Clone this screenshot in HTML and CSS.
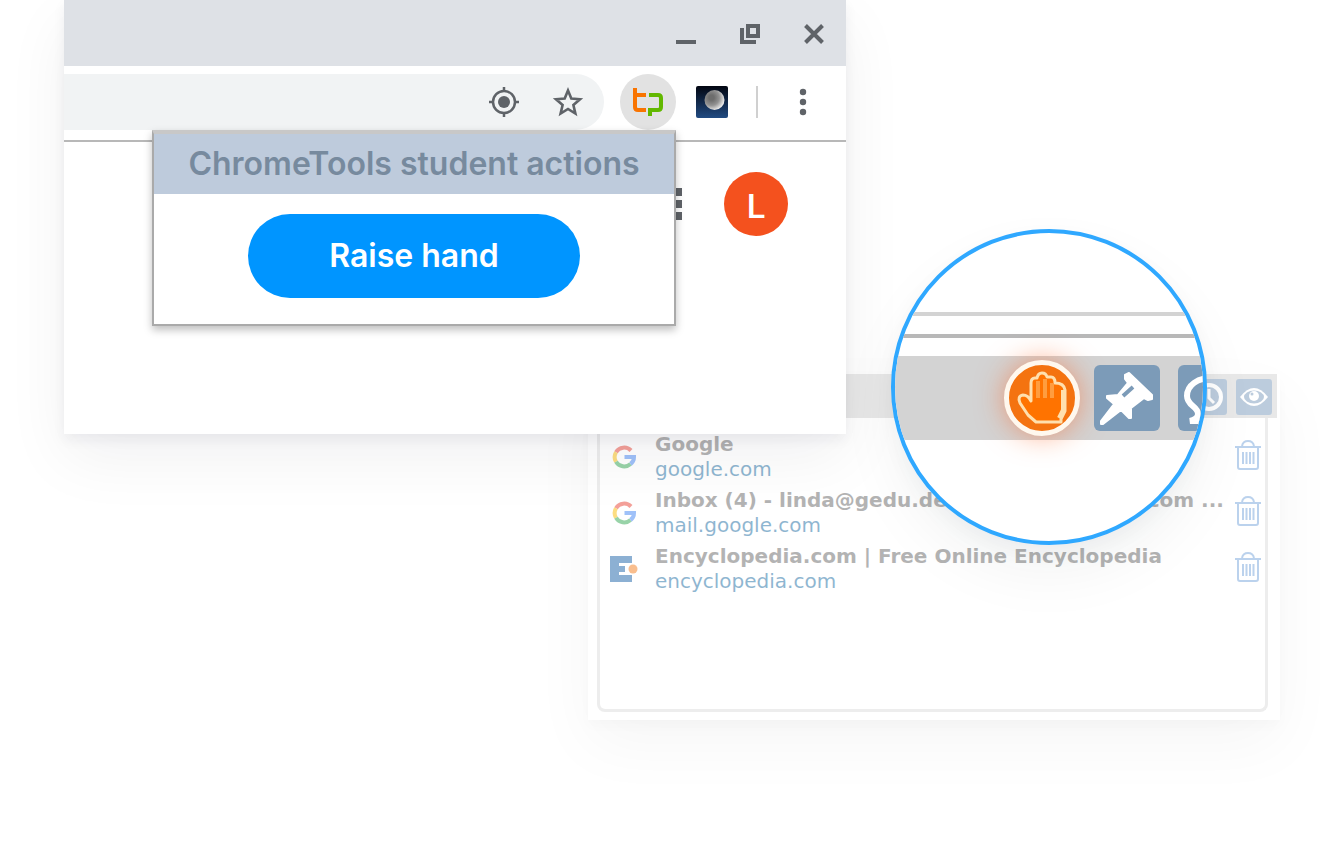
FILE: index.html
```html
<!DOCTYPE html>
<html lang="en">
<head>
  <meta charset="UTF-8">
  <meta name="viewport" content="width=device-width, initial-scale=1.0">
  <title>ChromeTools student actions</title>
  <link rel="stylesheet" href="styles.css">
</head>
<body>
  <!-- Shared icons -->
  <svg class="sprite" aria-hidden="true">
    <symbol id="google" viewBox="0 0 24 24">
      <g fill="none" stroke-width="4">
        <path stroke="#ea4335" d="M4 7.200A9.500 9.500 0 0 1 19 5.500"/>
        <path stroke="#fbbc05" d="M4 16.800A9.500 9.500 0 0 1 4 7.200"/>
        <path stroke="#34a853" d="M18.500 19A9.500 9.500 0 0 1 4 16.800"/>
        <path stroke="#4285f4" d="M12.500 12H22Q22 16.500 18.500 19"/>
      </g>
    </symbol>
    <symbol id="trash" viewBox="0 0 26 30">
      <g fill="none" stroke="#7aa7dc" stroke-width="2">
        <path d="M0 7H26M7 6Q8 1 13 1T19 6M3 8V27Q3 29 5 29H21Q23 29 23 27V8"/>
        <path d="M8 12V24M11.500 12V24M15 12V24M18.500 12V24" stroke-width="2"/>
      </g>
    </symbol>
  </svg>

  <main class="stage">
    <section class="browser">
      <div class="titlebar">
        <button type="button" aria-label="Minimize"><svg width="20" height="20"><path d="M0 16H20V20H0z"/></svg></button>
        <button type="button" aria-label="Restore"><svg width="20" height="20"><path d="M6 0H20V14H6zM10 4V10H16V4zM0 4H4V16H16V20H0z" fill-rule="evenodd"/></svg></button>
        <button type="button" aria-label="Close"><svg width="20" height="20"><path d="M1.500 1.500L18.500 18.500M18.500 1.500L1.500 18.500" stroke="#5f6368" stroke-width="4"/></svg></button>
      </div>

      <div class="toolbar">
        <div class="address">
          <button type="button" aria-label="Location">
            <svg width="32" height="32" viewBox="0 0 32 32"><circle cx="16" cy="16" r="6"/><g fill="none" stroke="#5f6368" stroke-width="2.500"><circle cx="16" cy="16" r="11"/><path d="M16 1V5M16 27V31M1 16H5M27 16H31"/></g></svg>
          </button>
          <button type="button" aria-label="Bookmark">
            <svg width="32" height="32" viewBox="0 0 32 32"><path d="M16 4.500L19.300 12.600L28 13.300L21.400 19L23.400 27.600L16 23L8.600 27.600L10.600 19L4 13.300L12.700 12.600z" fill="none" stroke="#5f6368" stroke-width="2.600"/></svg>
          </button>
        </div>
        <button type="button" class="extension" aria-label="ChromeTools">
          <svg width="32" height="32" viewBox="0 0 32 32"><g fill="none" stroke-width="4"><path stroke="#f97400" d="M3 2V21Q3 24 6 24H14M3 9H14"/><path stroke="#62b800" d="M17 9H26Q29 9 29 12V21Q29 24 26 24H18V30"/></g></svg>
        </button>
        <button type="button" class="moon" aria-label="Moon">
          <svg width="32" height="32" viewBox="0 0 32 32">
            <defs>
              <linearGradient id="night" x2="0" y2="1"><stop stop-color="#020611"/><stop offset="1" stop-color="#214b82"/></linearGradient>
              <radialGradient id="glow" cx=".35" cy=".38" r=".65"><stop offset=".2" stop-color="#6d6d6d"/><stop offset=".6" stop-color="#929292"/><stop offset="1" stop-color="#e8e8e8"/></radialGradient>
            </defs>
            <rect width="32" height="32" rx="2" fill="url(#night)"/><circle cx="18.500" cy="14" r="10" fill="url(#glow)"/>
          </svg>
        </button>
        <span class="divider"></span>
        <button type="button" class="menu" aria-label="Menu">
          <svg width="8" height="28"><circle cx="4" cy="4" r="3.200"/><circle cx="4" cy="14" r="3.200"/><circle cx="4" cy="24" r="3.200"/></svg>
        </button>
      </div>

      <div class="page">
        <button type="button" class="apps" aria-label="Apps"><svg width="32" height="32"><path d="M0 0H8V8H0zM12 0H20V8H12zM24 0H32V8H24zM0 12H8V20H0zM12 12H20V20H12zM24 12H32V20H24zM0 24H8V32H0zM12 24H20V32H12zM24 24H32V32H24z"/></svg></button>
        <button type="button" class="avatar">L</button>
      </div>

      <div class="popup">
        <h2>ChromeTools student actions</h2>
        <div class="popup-body">
          <button type="button" class="raise">Raise hand</button>
        </div>
      </div>
    </section>

    <section class="tabs">
      <div class="faded">
        <div class="tabs-bar">
          <button type="button" aria-label="History"><svg width="36" height="36" viewBox="0 0 36 36"><circle cx="18" cy="18" r="12" fill="none" stroke="#fff" stroke-width="4"/><path d="M18 10V19L23 24" fill="none" stroke="#fff" stroke-width="3"/></svg></button>
          <button type="button" aria-label="View"><svg width="36" height="36" viewBox="0 0 36 36"><path d="M4 18Q18 0 32 18Q18 36 4 18z" fill="#fff"/><ellipse cx="18" cy="18" rx="10" ry="6.500" fill="#7c9bbd"/><circle cx="18" cy="17" r="5" fill="#fff"/><circle cx="16" cy="15" r="1.500" fill="#7c9bbd"/></svg></button>
        </div>
        <ul class="tab-list">
          <li>
            <svg class="favicon" width="24" height="24"><use href="#google"/></svg>
            <div class="tab-text"><strong>Google</strong><a href="#">google.com</a></div>
            <button type="button" aria-label="Close Google"><svg width="26" height="30"><use href="#trash"/></svg></button>
          </li>
          <li>
            <svg class="favicon" width="24" height="24"><use href="#google"/></svg>
            <div class="tab-text"><strong>Inbox (4) - linda@gedu.demo.haparaschool.com ...</strong><a href="#">mail.google.com</a></div>
            <button type="button" aria-label="Close Inbox"><svg width="26" height="30"><use href="#trash"/></svg></button>
          </li>
          <li>
            <svg class="favicon" width="28" height="28" viewBox="0 0 28 28"><path fill="#1c64a8" d="M0 1H22V8H9V11H15V17H9V20H22V27H0z"/><circle cx="23" cy="14" r="4.500" fill="#f57f20"/></svg>
            <div class="tab-text"><strong>Encyclopedia.com | Free Online Encyclopedia</strong><a href="#">encyclopedia.com</a></div>
            <button type="button" aria-label="Close Encyclopedia"><svg width="26" height="30"><use href="#trash"/></svg></button>
          </li>
        </ul>
      </div>

      <!-- Magnified part of the bar -->
      <div class="lens">
        <hr class="light">
        <hr>
        <div class="lens-bar">
          <button type="button" class="hand" aria-label="Raised hand">
            <svg width="66" height="66" viewBox="0 0 66 66">
              <path d="M22 36V18Q22 13 26 13H28Q29 8 33 8T38 12H42Q46 12 46 18Q55 18 56 25V46L52 54V57H27L19 50L11 38Q8 31 14 30Q19 30 22 36z" fill="#ff7300" stroke="#ffe0ae" stroke-width="3" stroke-linejoin="round"/>
              <path d="M29 16V33M36 14V33M43 18V33" stroke="#ff9d3f" stroke-width="4"/>
              <path d="M54 25V45L50 53" fill="none" stroke="#ffe0ae" stroke-width="4"/>
            </svg>
          </button>
          <button type="button" class="square" aria-label="Pin">
            <svg width="66" height="66" viewBox="0 0 66 66"><path fill="#fff" stroke="#fff" stroke-width="2" stroke-linejoin="round" d="M35 8L58 30V34L54 35L50 33L37 43V53H35L27 45L9 59H7V56L20 39L13 33V31L24 30L34 18L31 14V10z"/><path d="M29 31L39 22" stroke="#7c9bb8" stroke-width="4"/></svg>
          </button>
          <button type="button" class="square last" aria-label="Focus">
            <svg width="66" height="66" viewBox="0 0 66 66"><path d="M33 13C20 13 9 20 9 31C9 41 20 41 20 49Q20 54 12 56H33" fill="none" stroke="#fff" stroke-width="6"/></svg>
          </button>
        </div>
      </div>
    </section>
  </main>
</body>
</html>
```

FILE: styles.css
```css
* {
  box-sizing: border-box;
}

body {
  margin: 0;
  background-color: #fff;
  font-family: Inter, "Open Sans", sans-serif;
}

button {
  display: flex;
  align-items: center;
  justify-content: center;
  flex-shrink: 0;
  padding: 0;
  border: none;
  background: none;
  font-family: inherit;
  cursor: pointer;
}

svg {
  display: block;
  fill: #5f6368;
}

.sprite {
  position: absolute;
  width: 0;
  height: 0;
}

/* The two windows share the middle cell */
.stage {
  display: grid;
  grid-template-columns: 64px 524fr 258fr 434fr 64px;
  grid-template-rows: 374px 60px auto;
  padding-bottom: 128px;
  overflow: hidden;
}

.browser {
  position: relative;
  z-index: 2;
  grid-column: 2 / 4;
  grid-row: 1 / 3;
  background-color: #fff;
  box-shadow: 0 6px 12px rgba(40, 40, 60, 0.06), 0 24px 60px rgba(20, 20, 30, 0.06);
}

.titlebar {
  display: flex;
  align-items: center;
  justify-content: flex-end;
  gap: 44px;
  height: 66px;
  padding: 2px 22px 0;
  background-color: #dee1e6;
}

.toolbar {
  display: flex;
  align-items: center;
  height: 76px;
  padding-bottom: 2px;
  border-bottom: 2px solid #b8b8b8;
}

.address {
  display: flex;
  flex: 1;
  align-items: center;
  justify-content: flex-end;
  gap: 32px;
  height: 56px;
  padding-right: 20px;
  border-radius: 0 28px 28px 0;
  background-color: #f1f3f4;
}

.extension {
  width: 56px;
  height: 56px;
  margin: 0 20px 0 16px;
  border-radius: 50%;
  background-color: #e2e2e2;
}

.divider {
  width: 2px;
  height: 32px;
  margin: 0 41px 0 28px;
  background-color: #d0d0d0;
}

.menu {
  margin-right: 39px;
}

.page {
  display: flex;
  align-items: center;
  justify-content: flex-end;
  gap: 42px;
  padding: 30px 58px 0;
}

.avatar {
  width: 64px;
  height: 64px;
  border-radius: 50%;
  background-color: #f4511e;
  color: #fff;
  font-family: Roboto, sans-serif;
  font-size: 34px;
  font-weight: 500;
  padding-top: 4px;
}

/* Popup */
.popup {
  position: absolute;
  top: 130px;
  right: 170px;
  width: 524px;
  border: 2px solid #aaa;
  border-top: 4px solid #c8c8c8;
  background-color: #fff;
  box-shadow: 0 4px 8px rgba(0, 0, 0, 0.25);
}

.popup h2 {
  margin: 0;
  background-color: #becbdc;
  color: #778a9e;
  font-size: 32px;
  font-weight: 600;
  line-height: 60px;
  text-align: center;
}

.popup-body {
  display: flex;
  justify-content: center;
  padding: 20px 0 26px;
}

.raise {
  width: 332px;
  height: 84px;
  padding-bottom: 2px;
  border-radius: 42px;
  background-color: #0095ff;
  color: #fff;
  font-size: 32px;
  font-weight: 600;
}

/* Open tabs */
.tabs {
  position: relative;
  z-index: 1;
  grid-column: 3 / 5;
  grid-row: 2 / 4;
  box-shadow: 0 6px 12px rgba(30, 30, 40, 0.02), 0 24px 60px rgba(20, 20, 30, 0.04);
}

.faded {
  padding: 0 3px 8px 0;
  opacity: 0.5;
}

.tabs-bar {
  display: flex;
  align-items: center;
  justify-content: flex-end;
  gap: 9px;
  height: 44px;
  padding-top: 2px;
  padding-right: 5px;
  background-color: #d3d3d3;
}

.tabs-bar button {
  width: 36px;
  height: 36px;
  border-radius: 3px;
  background-color: #7c9bbd;
}

.tab-list {
  min-height: 294px;
  margin: 0 9px;
  padding: 11px 4px 0 10px;
  border: 3px solid #dcdcdc;
  border-top: none;
  border-radius: 0 0 8px 8px;
  list-style: none;
}

.tab-list li {
  display: flex;
  align-items: center;
  height: 56px;
}

.tab-list button {
  padding-bottom: 4px;
}

.favicon {
  flex-shrink: 0;
  width: 28px;
}

.tab-text {
  display: flex;
  flex: 1;
  flex-direction: column;
  min-width: 0;
  margin: 0 12px 0 17px;
  font-family: Verdana, "DejaVu Sans", sans-serif;
  font-size: 20px;
  line-height: 25px;
  white-space: nowrap;
}

.tab-text strong {
  color: #6a6a6a;
}

.tab-text a {
  color: #1e6fa4;
  text-decoration: none;
}

/* Lens */
.lens {
  position: absolute;
  top: -145px;
  right: 73px;
  width: 316px;
  height: 316px;
  padding-top: 79px;
  overflow: hidden;
  border: 4px solid #2fa8ff;
  border-radius: 50%;
  background-color: #fff;
  box-shadow: 0 28px 60px rgba(0, 30, 40, 0.05), 0 8px 20px rgba(0, 30, 40, 0.04);
}

.lens hr {
  height: 4px;
  margin: 0 0 18px;
  border: none;
  background-color: #b8b8b8;
}

.lens hr.light {
  background-color: #d3d3d3;
}

.lens-bar {
  display: flex;
  align-items: center;
  height: 84px;
  padding-left: 109px;
  background-color: #d3d3d3;
}

.hand {
  width: 76px;
  height: 76px;
  border: 5px solid #fff8ee;
  border-radius: 50%;
  background-color: #f47310;
  box-shadow: 0 0 28px rgba(255, 90, 20, 0.5);
}

.square {
  width: 66px;
  height: 66px;
  margin-left: 14px;
  border-radius: 6px;
  background-color: #7c9bb8;
}

.last {
  margin-left: 18px;
}
```
